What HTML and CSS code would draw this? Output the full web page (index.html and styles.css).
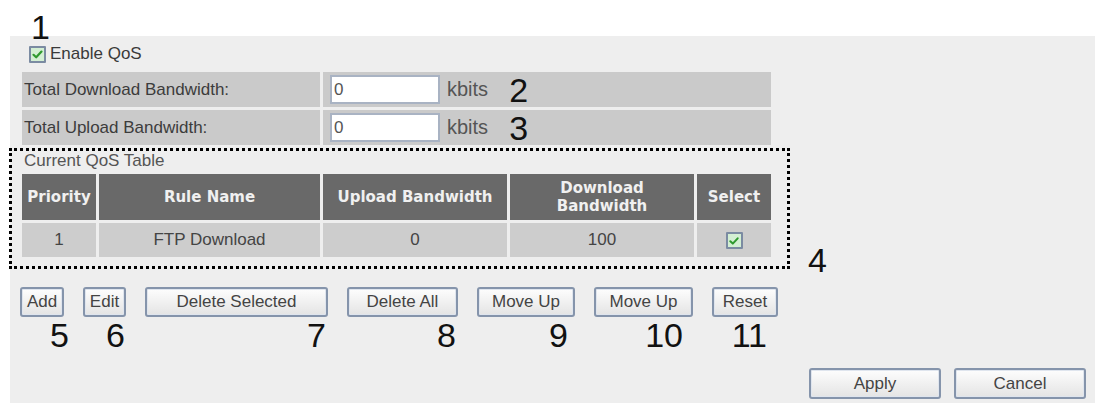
FILE: index.html
```html
<!DOCTYPE html>
<html>
<head>
<meta charset="utf-8">
<title>QoS</title>
<link rel="stylesheet" href="styles.css">
</head>
<body>
<div class="top"><span class="num num-1">1</span></div>
<div class="panel">
  <div class="enable-row">
    <span class="cb"><svg viewBox="0 0 13 13" width="13" height="13"><path d="M2.5 6.8 L5.2 9.3 L10.5 3.6" fill="none" stroke="#2f9a2f" stroke-width="2.2" stroke-linecap="round" stroke-linejoin="round"/></svg></span>
    <span class="enable-label">Enable QoS</span>
  </div>
  <div class="settings">
    <div class="label-cell">Total Download Bandwidth:</div>
    <div class="value-cell"><span class="txt">0</span><span class="unit">kbits</span><span class="num num-inline">2</span></div>
    <div class="label-cell">Total Upload Bandwidth:</div>
    <div class="value-cell"><span class="txt">0</span><span class="unit">kbits</span><span class="num num-inline">3</span></div>
  </div>
  <div class="table-row">
    <div class="dotted">
      <div class="caption">Current QoS Table</div>
      <table class="qos">
        <colgroup><col class="c1"><col class="c2"><col class="c3"><col class="c4"><col class="c5"></colgroup>
        <thead>
          <tr><th>Priority</th><th>Rule Name</th><th>Upload Bandwidth</th><th>Download<br>Bandwidth</th><th>Select</th></tr>
        </thead>
        <tbody>
          <tr><td>1</td><td>FTP Download</td><td>0</td><td>100</td><td><span class="cb cb-sm"><svg viewBox="0 0 13 13" width="12" height="12"><path d="M2.5 6.8 L5.2 9.3 L10.5 3.6" fill="none" stroke="#2f9a2f" stroke-width="2.2" stroke-linecap="round" stroke-linejoin="round"/></svg></span></td></tr>
        </tbody>
      </table>
    </div>
    <span class="num num-4">4</span>
  </div>
  <div class="buttons">
    <div class="grp"><span class="btn w-add">Add</span><span class="num n5">5</span></div>
    <div class="grp"><span class="btn w-edit">Edit</span><span class="num n6">6</span></div>
    <div class="grp"><span class="btn w-dels">Delete Selected</span><span class="num n7">7</span></div>
    <div class="grp"><span class="btn w-dela">Delete All</span><span class="num n8">8</span></div>
    <div class="grp"><span class="btn w-mv">Move Up</span><span class="num n9">9</span></div>
    <div class="grp"><span class="btn w-mv2">Move Up</span><span class="num n10">10</span></div>
    <div class="grp"><span class="btn w-reset">Reset</span><span class="num n11">11</span></div>
  </div>
  <div class="actions">
    <span class="btn w-big">Apply</span>
    <span class="btn w-big">Cancel</span>
  </div>
</div>
</body>
</html>
```

FILE: styles.css
```css
html, body {
  margin: 0;
  padding: 0;
  background: #ffffff;
  width: 1095px;
  height: 403px;
  overflow: hidden;
  font-family: "Liberation Sans", Arial, sans-serif;
}

.num {
  font-family: "Liberation Sans", Arial, sans-serif;
  font-size: 34px;
  line-height: 34px;
  color: #111;
}

.top {
  height: 36px;
  padding-left: 31px;
  box-sizing: border-box;
}
.num-1 {
  display: block;
  padding-top: 10px;
}

.panel {
  margin-left: 10px;
  height: 367px;
  background: #eeeeee;
  box-sizing: border-box;
}

.enable-row {
  height: 36px;
  display: flex;
  align-items: center;
  padding-left: 19px;
}
.enable-label {
  font-size: 17px;
  color: #3a3a3a;
  margin-left: 4px;
}

.cb {
  width: 17px;
  height: 17px;
  box-sizing: border-box;
  border: 2px solid #7b8ba2;
  background: #d3efd3;
  display: inline-flex;
  align-items: center;
  justify-content: center;
  border-radius: 1px;
}
.cb-sm {
  width: 17px;
  height: 17px;
  vertical-align: middle;
}

.settings {
  margin-left: 12px;
  display: grid;
  grid-template-columns: 298px 448px;
  grid-auto-rows: 35px;
  column-gap: 3px;
  row-gap: 3px;
}
.label-cell {
  background: #cacaca;
  font-size: 17px;
  color: #3c3c3c;
  display: flex;
  align-items: center;
  padding-left: 2px;
}
.value-cell {
  background: #cacaca;
  display: flex;
  align-items: center;
  padding-left: 7px;
}
.txt {
  width: 110px;
  height: 29px;
  box-sizing: border-box;
  border: 2px solid #a9b3c3;
  background: #ffffff;
  font-size: 17px;
  color: #555;
  padding-left: 2px;
  display: flex;
  align-items: center;
}
.unit {
  font-size: 20px;
  color: #555;
  margin-left: 7px;
}
.num-inline {
  margin-left: 21px;
}

.table-row {
  display: flex;
  align-items: flex-end;
  margin-top: 3px;
  margin-left: -1px;
}
.dotted {
  width: 781px;
  height: 121px;
  box-sizing: border-box;
  border: 3px dotted #000;
}
.caption {
  font-size: 17px;
  line-height: 20px;
  color: #555;
  padding-left: 12px;
}
.qos {
  margin-left: 7px;
  border-collapse: separate;
  border-spacing: 3px;
  table-layout: fixed;
  width: 755px;
}
.c1 { width: 74px; }
.c2 { width: 221px; }
.c3 { width: 184px; }
.c4 { width: 184px; }
.c5 { width: 74px; }
.qos th {
  background: #696969;
  color: #f0f0f0;
  font-family: "DejaVu Sans", Verdana, sans-serif;
  font-weight: bold;
  font-size: 15px;
  line-height: 18px;
  height: 46px;
  padding: 0;
  text-align: center;
}
.qos td {
  background: #cdcdcd;
  color: #444;
  font-size: 17px;
  height: 34px;
  padding: 0;
  text-align: center;
}
.num-4 {
  margin-left: 18px;
  margin-bottom: -8px;
}

.buttons {
  display: flex;
  gap: 19px;
  margin-top: 18px;
  margin-left: 10px;
}
.grp {
  display: flex;
  flex-direction: column;
  align-items: flex-end;
}
.btn {
  height: 30px;
  box-sizing: border-box;
  border: 2px solid #8594ab;
  border-radius: 3px;
  background: linear-gradient(#fdfdfd, #e4e4e4);
  box-shadow: inset 0 0 0 1px #dfe5ee;
  font-size: 17px;
  color: #444;
  display: flex;
  align-items: center;
  justify-content: center;
}
.w-add { width: 44px; }
.w-edit { width: 43px; }
.w-dels { width: 183px; }
.w-dela { width: 111px; }
.w-mv { width: 98px; }
.w-mv2 { width: 99px; }
.w-reset { width: 66px; }
.w-big { width: 132px; height: 31px; }

.grp .num { margin-top: 1px; }
.n5 { margin-right: -5px; }
.n6 { margin-right: 1px; }
.n7 { margin-right: 2px; }
.n8 { margin-right: 2px; }
.n9 { margin-right: 7px; }
.n10 { margin-right: 10px; }
.n11 { margin-right: 11px; }

.actions {
  display: flex;
  justify-content: flex-end;
  gap: 13px;
  margin-top: 16px;
  padding-right: 9px;
}
```
